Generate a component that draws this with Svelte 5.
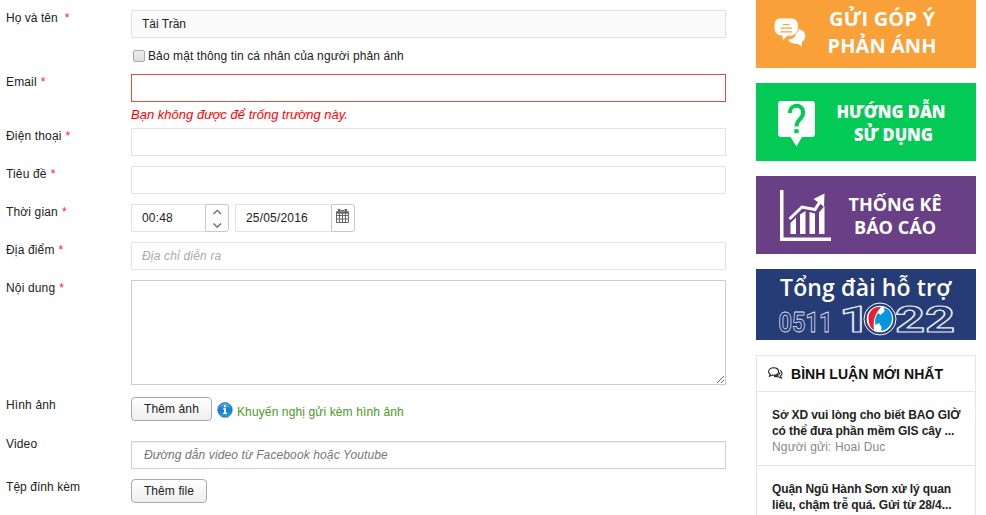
<script>
  let secret = $state(false);
  const comments = [
    { lines: ['Sở XD vui lòng cho biết BAO GIỜ', 'có thể đưa phần mềm GIS cây ...'], by: 'Hoai Duc' },
    { lines: ['Quận Ngũ Hành Sơn xử lý quan', 'liêu, chậm trễ quá. Gửi từ 28/4...'], by: '' }
  ];
</script>

{#snippet label(text, required = true, cls = '')}
  <div class="label {cls}">{text}{#if required}<span class="req">*</span>{/if}</div>
{/snippet}

<div class="page">
  <form class="form">
    <div class="row r64">
      {@render label('Họ và tên', true, 'wide')}
      <div class="field">
        <input class="box filled" value="Tài Trần" readonly />
        <label class="check"><input type="checkbox" bind:checked={secret} /><i></i><span>Bảo mật thông tin cá nhân của người phản ánh</span></label>
      </div>
    </div>
    <div class="row r54">
      {@render label('Email')}
      <div class="field">
        <input class="box invalid" />
        <div class="error">Bạn không được để trống trường này.</div>
      </div>
    </div>
    <div class="row">{@render label('Điện thoại')}<div class="field"><input class="box" /></div></div>
    <div class="row">{@render label('Tiêu đề')}<div class="field"><input class="box" /></div></div>
    <div class="row">
      {@render label('Thời gian')}
      <div class="field times">
        <input class="box time" value="00:48" />
        <span class="addon">
          <svg width="22" height="26" viewBox="0 0 22 26" fill="none" stroke="#666" stroke-width="1.3"><path d="M7.5 9 11.2 5.3 15 9M7.5 18.5 11.2 22.2 15 18.5" /></svg>
        </span>
        <input class="box date" value="25/05/2016" />
        <span class="addon">
          <svg width="22" height="26" viewBox="0 0 22 26" fill="none" stroke="#666"><path d="M4.500 7.500h12v10h-12zM4.500 10.500h12M4.500 14h12M7.500 8v10M10.500 8v10M13.500 8v10" /><path d="M4 7.500h13" stroke-width="2.400" /><path d="M7.200 4v3.500M13.800 4v3.500" stroke-width="2.600" /><path d="M9 5.500h3" /></svg>
        </span>
      </div>
    </div>
    <div class="row">{@render label('Địa điểm')}<div class="field"><input class="box" placeholder="Địa chỉ diễn ra" /></div></div>
    <div class="row r117">{@render label('Nội dung')}<div class="field"><textarea class="box"></textarea></div></div>
    <div class="row r44">
      {@render label('Hình ảnh', false)}
      <div class="field images">
        <button type="button">Thêm ảnh</button>
        <svg width="16" height="16" viewBox="0 0 16 16">
          <defs><linearGradient id="info" x2="0" y2="1"><stop stop-color="#5db5ec" /><stop offset=".5" stop-color="#1679cf" /><stop offset="1" stop-color="#23a5ee" /></linearGradient></defs>
          <ellipse cx="8" cy="15" rx="5" ry="1" fill="#ccc" />
          <circle cx="8" cy="7.8" r="7.2" fill="url(#info)" stroke="#1767b1" stroke-width=".8" />
          <path d="M7 3.3h2v2H7zM6.2 6.3H9v4.4h1v1.2H6.1v-1.2H7V7.5h-.8z" fill="#fff" />
        </svg>
        <span class="hint">Khuyến nghị gửi kèm hình ảnh</span>
      </div>
    </div>
    <div class="row">{@render label('Video', false, 'high')}<div class="field"><input class="box video" placeholder="Đường dẫn video từ Facebook hoặc Youtube" /></div></div>
    <div class="row">{@render label('Tệp đính kèm', false, 'tight')}<div class="field"><button type="button" class="file">Thêm file</button></div></div>
  </form>

  <aside>
    <svg class="banner" width="220" height="68" viewBox="0 0 220 68">
      <rect width="220" height="68" fill="#f9a138" />
      <path d="M40 29c6 0 9.300 3 9.300 7 0 3-2 5-3.300 6l-.2 4.500-4-2.800c-5 .3-8.500-1-9.500-4 7-1 9-5 7.700-10.700z" fill="#fff" />
      <path d="M24.500 18h10c5.500 0 8 3 8 8.500 0 6.500-3.500 9.800-9.500 9.800h-2l-4.500 5-.5-5.300C20.500 35.500 18 32.500 18 27c0-6 2-9 6.500-9z" fill="#fff" stroke="#f9a138" stroke-width=".9" />
      <path d="M27 24.500h6.500M24.500 28.200h11.500M24.500 31.800h11.500" stroke="#f9a138" stroke-width="1.200" />
      <g class="caption"><text x="73" y="25.500" font-size="20" textLength="106">GỬI GÓP Ý</text><text x="71.500" y="52.500" font-size="20" textLength="109">PHẢN ÁNH</text></g>
    </svg>
    <svg class="banner" width="220" height="78" viewBox="0 0 220 78">
      <rect width="220" height="78" fill="#02ca54" />
      <path d="M25 18h31q3 0 3 3v30q0 3-3 3H46l-5.500 9.500L34.500 54H25q-3 0-3-3V21q0-3 3-3z" fill="#fff" />
      <path d="M33.800 30c0-9.500 13.400-9.500 13.400-.5 0 6.500-6.700 7-6.700 14" fill="none" stroke="#02ca54" stroke-width="4" /><path d="M38.300 46.200h4.400v4h-4.400z" fill="#02ca54" />
      <g class="caption heavy"><text x="80.500" y="35" font-size="17" textLength="109" lengthAdjust="spacingAndGlyphs">HƯỚNG DẪN</text><text x="98" y="58" font-size="17" textLength="79" lengthAdjust="spacingAndGlyphs">SỬ DỤNG</text></g>
    </svg>
    <svg class="banner" width="220" height="78" viewBox="0 0 220 78">
      <rect width="220" height="78" fill="#694085" />
      <path d="M24 14h3.500v47.500H75V65H24z" fill="#fff" />
      <path d="M34.500 47l5.500-5.500V58h-5.500zM44 38.500l5.500-3.500v23H44zM53.500 36l5.500 1.500V58h-5.500zM63 36.500l5.500-6.500v28H63z" fill="#fff" />
      <path d="M33.500 43 46 31l13 2.500 6-9.500" fill="none" stroke="#fff" stroke-width="3" /><path d="M57.500 23 68.500 17.500 68 31l-4-3.500z" fill="#fff" />
      <g class="caption bold"><text x="92.500" y="34.500" font-size="18.500" textLength="93" lengthAdjust="spacingAndGlyphs">THỐNG KÊ</text><text x="98" y="57.500" font-size="18.500" textLength="82" lengthAdjust="spacingAndGlyphs">BÁO CÁO</text></g>
    </svg>
    <svg class="banner" width="220" height="71" viewBox="0 0 220 71">
      <rect width="220" height="71" fill="#263c77" />
      <text class="support" x="24" y="26.500" font-size="23" textLength="171">Tổng đài hỗ trợ</text>
      <g class="digits" fill="none" stroke="#e7ebf5" stroke-width=".8">
        <text x="22.500" y="63" font-size="28" textLength="54" lengthAdjust="spacingAndGlyphs">0511</text>
        <text x="83" y="63" font-size="37" textLength="32" lengthAdjust="spacingAndGlyphs" stroke-width="1.200">1</text>
        <text x="139" y="63" font-size="37" textLength="60" lengthAdjust="spacingAndGlyphs" stroke-width="1.200">22</text>
      </g>
      <circle cx="124" cy="50" r="16" fill="#263c77" stroke="#fff" stroke-width="1" />
      <circle cx="124" cy="50" r="13.300" fill="#fff" />
      <path d="M125 38c-8-1-13 5-12.500 12 0 5 2 9 5.500 11.500-1-8 0-16 7-23.500z" fill="#ed1c2e" />
      <path d="M128 38.500c5.500 1.500 8.500 6 8 12-.5 6-5.500 11-11 11.300l.5-3.800-2.500-4-3.500 2c-1-5 0-9 2.500-12l2.500 2 4-3.500z" fill="#0795dc" />
    </svg>

    <section>
      <header>
        <svg width="15" height="13" viewBox="0 0 15 13" fill="none" stroke="#222" stroke-width="1.100"><path d="M5.600.8c3 0 5 1.500 5 3.700S8.600 8.200 5.600 8.200l-1.300-.1L1.500 9.300l.8-1.900C1.200 6.700.6 5.700.6 4.500.6 2.300 2.700.8 5.600.8zM12 3.200c2.600 1.400 2.700 4.300.5 5.700l.9 2-3.200-1.200c-1.600.2-2.900 0-4-.5 3 0 5.500-1.500 5.800-4" /></svg>
        <h3>BÌNH LUẬN MỚI NHẤT</h3>
      </header>
      {#each comments as c, i}
        <article class="c{i}">
          {#each c.lines as line}<b>{line}</b>{/each}
          {#if c.by}<span>Người gửi: {c.by}</span>{/if}
        </article>
      {/each}
    </section>
  </aside>
</div>

<style>
  :global(body) { background: #fff; overflow: hidden; }
  .page { display: flex; width: 986px; height: 515px; overflow: hidden; font: 12px/16px "Liberation Sans", Arial, sans-serif; color: #222; }
  .form { width: 726px; padding-top: 10px; margin: 0; }
  .row { display: flex; height: 38px; }
  .r64 { height: 64px; }
  .r54 { height: 54px; }
  .r117 { height: 117px; }
  .r44 { height: 44px; }
  .label { width: 125px; padding-left: 6px; letter-spacing: .15px; white-space: nowrap; flex: none; }
  .high { margin-top: -5px; }
  .tight { letter-spacing: .05px; }
  .req { color: #f22; margin-left: 4px; }
  .wide { letter-spacing: .05px; }
  .wide .req { margin-left: 7px; }
  .field { width: 595px; flex: none; }
  .box { box-sizing: border-box; display: block; width: 595px; height: 28px; margin: 0; padding: 0 10px; border: 1px solid #e3e3e3; border-radius: 0; background: #fff; color: #222; font: 12px "Liberation Sans", Arial, sans-serif; letter-spacing: .18px; outline: 0; }
  .box::placeholder { color: #aaa; font-style: italic; opacity: 1; }
  .filled { background: #fafafa; letter-spacing: 0; }
  .invalid { border-color: #d9503b; }
  .check { display: flex; align-items: center; height: 16px; margin-top: 10px; padding-left: 2px; letter-spacing: .1px; }
  .check input { display: none; }
  .check i { box-sizing: border-box; width: 12px; height: 12px; border: 1px solid #aaa; border-radius: 2px; background: linear-gradient(#eee, #ddd); margin-right: 3px; }
  .error { color: #f00; font-size: 13px; font-style: italic; margin-top: 5px; letter-spacing: .02px; }
  .times { display: flex; }
  .times .box { border-right: 0; }
  .time { width: 74px; }
  .date { width: 96px; margin-left: 6px; }
  .addon { box-sizing: border-box; width: 24px; height: 28px; border: 1px solid #c8c8c8; border-radius: 0 3px 3px 0; }
  .addon svg { display: block; }
  textarea.box { height: 105px; border-color: #ccc; resize: vertical; }
  button { box-sizing: border-box; display: block; width: 81px; height: 24px; padding: 0; border: 1px solid #aaa; border-radius: 4px; background: linear-gradient(#fff, #eee); color: #222; font: 12px "Liberation Sans", Arial, sans-serif; letter-spacing: .1px; }
  .file { width: 76px; }
  .images { display: flex; }
  .images svg { margin: 5px 4px 0 5px; }
  .hint { color: #4a9a1c; margin-top: 7px; letter-spacing: .12px; }
  .video { border-color: #d0d0d0; padding-left: 12px; box-shadow: inset 0 1px 1px #eee; letter-spacing: .12px; }
  .video::placeholder { color: #777; }
  aside { width: 220px; margin-left: 30px; }
  .banner { display: block; margin-bottom: 15px; }
  .caption, .support { font-family: "Open Sans", sans-serif; fill: #fff; }
  .caption { font-weight: 700; }
  .heavy { font-weight: 800; }
  .support { font-weight: 600; }
  .digits { font-family: Roboto, sans-serif; font-weight: 700; stroke-linejoin: round; }
  section { border: 1px solid #e5e5e5; height: 170px; }
  header { display: flex; align-items: center; height: 35px; padding-left: 11px; border-bottom: 1px solid #e5e5e5; }
  h3 { margin: 0 0 0 8px; font-size: 14px; line-height: 18px; letter-spacing: .05px; color: #111; white-space: nowrap; }
  article { display: flex; flex-direction: column; box-sizing: border-box; height: 74px; padding: 15px 0 0 15px; border-bottom: 1px solid #e5e5e5; white-space: nowrap; letter-spacing: -.1px; }
  article span { color: #888; letter-spacing: .15px; }
</style>
